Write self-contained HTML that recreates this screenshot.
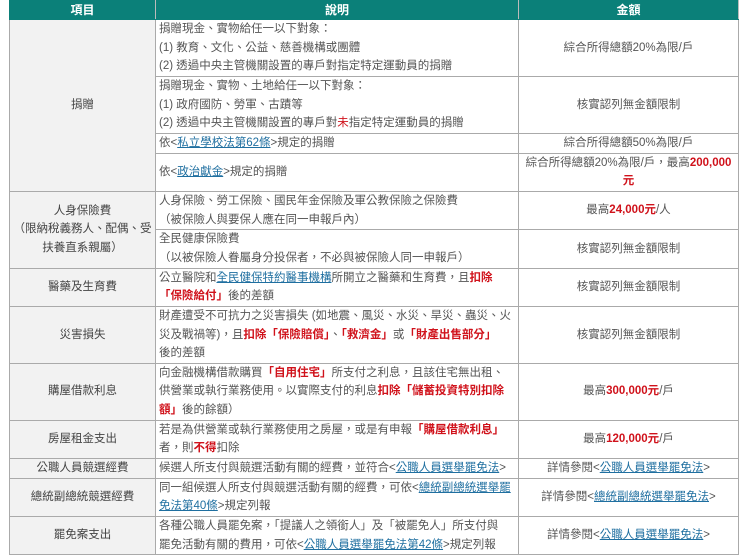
<!DOCTYPE html>
<html><head><meta charset="utf-8"><style>
body{margin:0;background:#fff;}
table{position:absolute;left:9px;top:0;width:729px;border-collapse:collapse;table-layout:fixed;font-family:"Liberation Sans","Noto Sans CJK TC",sans-serif;font-size:11.5px;line-height:18.65px;color:#555;}
td,th{border:1px solid #aaa;padding:0 3px;vertical-align:middle;white-space:nowrap;overflow:hidden;}
th{background:#0b8079;color:#fff;height:18px;line-height:18px;font-weight:bold;border-color:#0b8079;border-right-color:#bbb;font-size:12px;}
td.c1{background:#f2f2f2;text-align:center;color:#444;}
td.c3{text-align:center;}
.r{color:#d0121b;font-weight:bold;}
.rn{color:#d0121b;}
a{color:#1f6fa0;text-decoration:underline;}
</style></head><body>
<table>
<colgroup><col style="width:146px"><col style="width:363px"><col style="width:220px"></colgroup>
<tr><th>項目</th><th>說明</th><th>金額</th></tr>
<tr><td class="c1" rowspan="4">捐贈</td><td>捐贈現金、實物給任一以下對象：<br>(1) 教育、文化、公益、慈善機構或團體<br>(2) 透過中央主管機關設置的專戶對指定特定運動員的捐贈</td><td class="c3">綜合所得總額20%為限/戶</td></tr>
<tr><td>捐贈現金、實物、土地給任一以下對象：<br>(1) 政府國防、勞軍、古蹟等<br>(2) 透過中央主管機關設置的專戶對<span class="rn">未</span>指定特定運動員的捐贈</td><td class="c3">核實認列無金額限制</td></tr>
<tr><td>依&lt;<a>私立學校法第62條</a>&gt;規定的捐贈</td><td class="c3">綜合所得總額50%為限/戶</td></tr>
<tr><td>依&lt;<a>政治獻金</a>&gt;規定的捐贈</td><td class="c3">綜合所得總額20%為限/戶，最高<span class="r">200,000</span><br><span class="r">元</span></td></tr>
<tr><td class="c1" rowspan="2">人身保險費<br>（限納稅義務人、配偶、受<br>扶養直系親屬）</td><td>人身保險、勞工保險、國民年金保險及軍公教保險之保險費<br>（被保險人與要保人應在同一申報戶內）</td><td class="c3">最高<span class="r">24,000元</span>/人</td></tr>
<tr><td>全民健康保險費<br>（以被保險人眷屬身分投保者，不必與被保險人同一申報戶）</td><td class="c3">核實認列無金額限制</td></tr>
<tr><td class="c1">醫藥及生育費</td><td>公立醫院和<a>全民健保特約醫事機構</a>所開立之醫藥和生育費，且<span class="r">扣除</span><br><span class="r">「保險給付」</span>後的差額</td><td class="c3">核實認列無金額限制</td></tr>
<tr><td class="c1">災害損失</td><td>財產遭受不可抗力之災害損失 (如地震、風災、水災、旱災、蟲災、火<br>災及戰禍等)，且<span class="r">扣除「保險賠償」</span>、<span class="r">「救濟金」</span>或<span class="r">「財產出售部分」</span><br>後的差額</td><td class="c3">核實認列無金額限制</td></tr>
<tr><td class="c1">購屋借款利息</td><td>向金融機構借款購買<span class="r">「自用住宅」</span>所支付之利息，且該住宅無出租、<br>供營業或執行業務使用。以實際支付的利息<span class="r">扣除「儲蓄投資特別扣除</span><br><span class="r">額」</span>後的餘額）</td><td class="c3">最高<span class="r">300,000元</span>/戶</td></tr>
<tr><td class="c1">房屋租金支出</td><td>若是為供營業或執行業務使用之房屋，或是有申報<span class="r">「購屋借款利息」</span><br>者，則<span class="r">不得</span>扣除</td><td class="c3">最高<span class="r">120,000元</span>/戶</td></tr>
<tr><td class="c1">公職人員競選經費</td><td>候選人所支付與競選活動有關的經費，並符合&lt;<a>公職人員選舉罷免法</a>&gt;</td><td class="c3">詳情參閱&lt;<a>公職人員選舉罷免法</a>&gt;</td></tr>
<tr><td class="c1">總統副總統競選經費</td><td>同一組候選人所支付與競選活動有關的經費，可依&lt;<a>總統副總統選舉罷</a><br><a>免法第40條</a>&gt;規定列報</td><td class="c3">詳情參閱&lt;<a>總統副總統選舉罷免法</a>&gt;</td></tr>
<tr><td class="c1">罷免案支出</td><td>各種公職人員罷免案，「提議人之領銜人」及「被罷免人」所支付與<br>罷免活動有關的費用，可依&lt;<a>公職人員選舉罷免法第42條</a>&gt;規定列報</td><td class="c3">詳情參閱&lt;<a>公職人員選舉罷免法</a>&gt;</td></tr>
</table>
</body></html>
